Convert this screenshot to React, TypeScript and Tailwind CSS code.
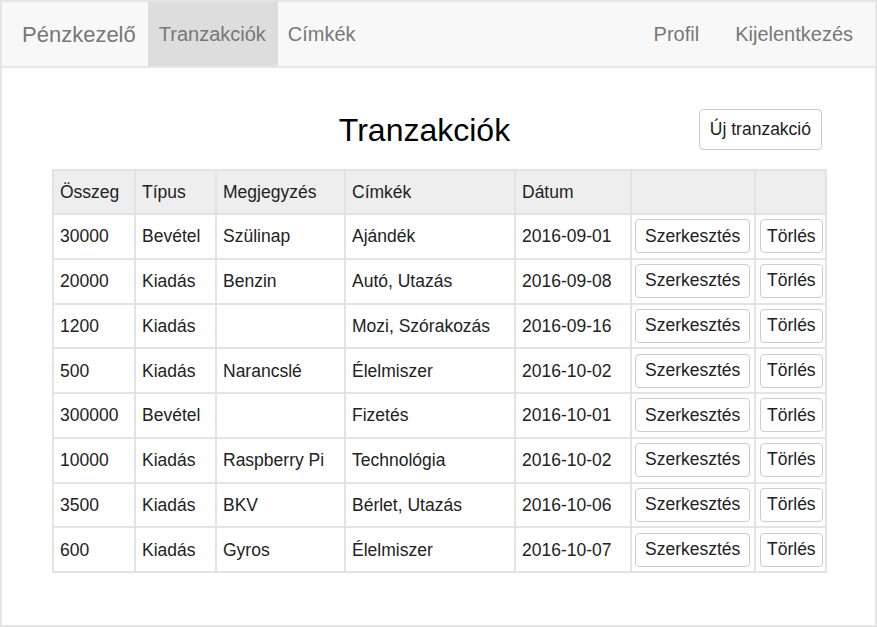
import React from 'react'

type Row = {
  amount: string
  type: string
  note: string
  tags: string
  date: string
}

const rows: Row[] = [
  { amount: '30000', type: 'Bevétel', note: 'Szülinap', tags: 'Ajándék', date: '2016-09-01' },
  { amount: '20000', type: 'Kiadás', note: 'Benzin', tags: 'Autó, Utazás', date: '2016-09-08' },
  { amount: '1200', type: 'Kiadás', note: '', tags: 'Mozi, Szórakozás', date: '2016-09-16' },
  { amount: '500', type: 'Kiadás', note: 'Narancslé', tags: 'Élelmiszer', date: '2016-10-02' },
  { amount: '300000', type: 'Bevétel', note: '', tags: 'Fizetés', date: '2016-10-01' },
  { amount: '10000', type: 'Kiadás', note: 'Raspberry Pi', tags: 'Technológia', date: '2016-10-02' },
  { amount: '3500', type: 'Kiadás', note: 'BKV', tags: 'Bérlet, Utazás', date: '2016-10-06' },
  { amount: '600', type: 'Kiadás', note: 'Gyros', tags: 'Élelmiszer', date: '2016-10-07' },
]

const cell = 'border-2 border-[#e3e3e3] px-[6px] text-left align-middle'

// padding/height come in through className so they don't fight a default
function Button({ children, className = '' }: { children: React.ReactNode; className?: string }) {
  return (
    <button
      className={
        'rounded-[4px] border border-[#cccccc] bg-white text-[17.5px] leading-none text-[#222] ' + className
      }
    >
      {children}
    </button>
  )
}

export default function App() {
  return (
    <div
      className="flex h-[627px] w-[877px] flex-col border-2 border-[#e5e5e5] bg-white text-[#222]"
      style={{ fontFamily: '"Liberation Sans", Arial, sans-serif' }}
    >
      {/* Navbar */}
      <nav className="flex h-[66px] shrink-0 items-stretch border-b-2 border-[#e7e7e7] bg-[#f8f8f8] text-[#777]">
        <div className="flex items-center pl-[20px] pr-[12px] text-[22px]">Pénzkezelő</div>
        <a className="flex items-center bg-[#dddddd] pl-[11px] pr-[12px] text-[20px]">Tranzakciók</a>
        <a className="flex items-center px-[10px] text-[20px]">Címkék</a>
        <div className="flex-1" />
        <a className="flex items-center px-[18px] text-[20px]">Profil</a>
        <a className="flex items-center pl-[18px] pr-[22px] text-[20px]">Kijelentkezés</a>
      </nav>

      {/* Content */}
      <main className="flex flex-col px-[50px] pt-[41px]">
        <div className="relative flex h-[42px] items-center justify-center pr-[28px]">
          <h1 className="text-[32px] leading-none text-black">Tranzakciók</h1>
          <Button className="absolute right-[3px] top-0 h-[41px] px-[10px]">Új tranzakció</Button>
        </div>

        <table className="mt-[18px] w-[773px] table-fixed border-collapse text-[17.5px]">
          <colgroup>
            <col className="w-[82px]" />
            <col className="w-[81px]" />
            <col className="w-[129px]" />
            <col className="w-[170px]" />
            <col className="w-[116px]" />
            <col className="w-[124px]" />
            <col className="w-[71px]" />
          </colgroup>
          <thead>
            <tr className="h-[44px] bg-[#eeeeee]">
              <th className={cell + ' font-normal'}>Összeg</th>
              <th className={cell + ' font-normal'}>Típus</th>
              <th className={cell + ' font-normal'}>Megjegyzés</th>
              <th className={cell + ' font-normal'}>Címkék</th>
              <th className={cell + ' font-normal'}>Dátum</th>
              <th className={cell}></th>
              <th className={cell}></th>
            </tr>
          </thead>
          <tbody>
            {rows.map((r) => (
              <tr key={r.amount + r.date} className="h-[44.75px]">
                <td className={cell}>{r.amount}</td>
                <td className={cell}>{r.type}</td>
                <td className={cell}>{r.note}</td>
                <td className={cell}>{r.tags}</td>
                <td className={cell}>{r.date}</td>
                <td className="border-2 border-[#e3e3e3] pl-[3px] align-middle">
                  <Button className="h-[34px] px-[9px]">Szerkesztés</Button>
                </td>
                <td className="border-2 border-[#e3e3e3] pl-[4px] align-middle">
                  <Button className="h-[34px] px-[6px]">Törlés</Button>
                </td>
              </tr>
            ))}
          </tbody>
        </table>
      </main>
    </div>
  )
}
